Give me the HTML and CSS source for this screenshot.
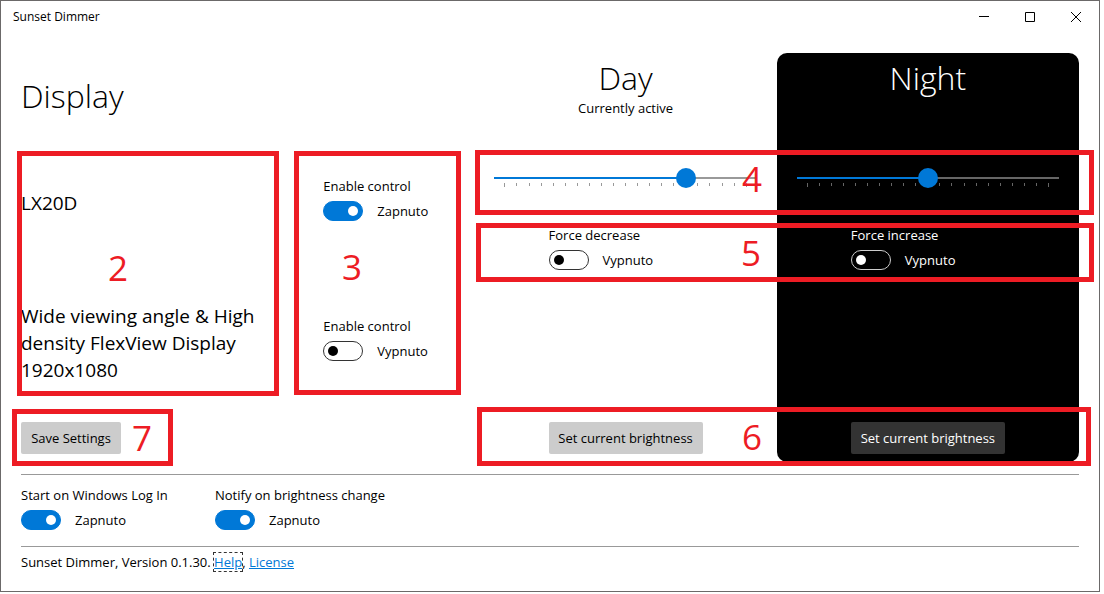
FILE: index.html
```html
<!DOCTYPE html>
<html lang="en">
<head>
<meta charset="utf-8">
<title>Sunset Dimmer</title>
<link rel="stylesheet" href="styles.css">
</head>
<body>
<div class="window">
  <header class="titlebar">
    <span class="titlebar-name">Sunset Dimmer</span>
    <button class="caption-button" type="button" aria-label="Minimize"><svg width="10" height="10" viewBox="0 0 10 10"><path d="M0 4.5H10"/></svg></button>
    <button class="caption-button" type="button" aria-label="Maximize"><svg width="10" height="10" viewBox="0 0 10 10"><path d="M.5 .5H9.5V9.5H.5Z"/></svg></button>
    <button class="caption-button" type="button" aria-label="Close"><svg width="10" height="10" viewBox="0 0 10 10"><path d="M0 0L10 10M10 0L0 10"/></svg></button>
  </header>

  <main class="content">
    <div class="board">
      <section class="column">
        <h1 class="heading heading-left">Display</h1>
        <p class="monitor">LX20D</p>
        <p class="monitor">Wide viewing angle &amp; High density FlexView Display 1920x1080</p>
        <button class="button save" type="button">Save Settings</button>
      </section>

      <section class="column">
        <div class="toggle enable first">
          <label for="enable-1">Enable control</label>
          <div class="toggle-row"><input class="switch" type="checkbox" role="switch" id="enable-1" checked><span>Zapnuto</span></div>
        </div>
        <div class="toggle enable second">
          <label for="enable-2">Enable control</label>
          <div class="toggle-row"><input class="switch" type="checkbox" role="switch" id="enable-2"><span>Vypnuto</span></div>
        </div>
      </section>

      <section class="column">
        <div class="period-head">
          <h2 class="heading">Day</h2>
          <span>Currently active</span>
        </div>
        <div class="period-controls">
          <div class="slider">
            <div class="ticks"><i></i><i></i><i></i><i></i><i></i><i></i><i></i><i></i><i></i><i></i><i></i><i></i><i></i><i></i><i></i><i></i><i></i><i></i><i></i><i></i><i></i></div>
            <input class="range" type="range" min="0" max="100" value="75" aria-label="Day brightness" style="--level: 75%">
          </div>
          <div class="toggle force">
            <label for="force-day">Force decrease</label>
            <div class="toggle-row"><input class="switch" type="checkbox" role="switch" id="force-day"><span>Vypnuto</span></div>
          </div>
        </div>
        <button class="button" type="button">Set current brightness</button>
      </section>

      <section class="column night">
        <div class="period-head">
          <h2 class="heading">Night</h2>
        </div>
        <div class="period-controls">
          <div class="slider">
            <div class="ticks"><i></i><i></i><i></i><i></i><i></i><i></i><i></i><i></i><i></i><i></i><i></i><i></i><i></i><i></i><i></i><i></i><i></i><i></i><i></i><i></i><i></i></div>
            <input class="range" type="range" min="0" max="100" value="50" aria-label="Night brightness" style="--level: 50%">
          </div>
          <div class="toggle force">
            <label for="force-night">Force increase</label>
            <div class="toggle-row"><input class="switch" type="checkbox" role="switch" id="force-night"><span>Vypnuto</span></div>
          </div>
        </div>
        <button class="button" type="button">Set current brightness</button>
      </section>
    </div>

    <section class="options">
      <div class="toggle">
        <label for="autostart">Start on Windows Log In</label>
        <div class="toggle-row"><input class="switch" type="checkbox" role="switch" id="autostart" checked><span>Zapnuto</span></div>
      </div>
      <div class="toggle">
        <label for="notify">Notify on brightness change</label>
        <div class="toggle-row"><input class="switch" type="checkbox" role="switch" id="notify" checked><span>Zapnuto</span></div>
      </div>
    </section>

    <footer class="about">Sunset Dimmer, Version 0.1.30. <a class="focused" href="#help">Help</a>, <a href="#license">License</a></footer>
  </main>

  <div class="note note-2"><span>2</span></div>
  <div class="note note-3"><span>3</span></div>
  <div class="note note-4"><span>4</span></div>
  <div class="note note-5"><span>5</span></div>
  <div class="note note-6"><span>6</span></div>
  <div class="note note-7"><span>7</span></div>
</div>
</body>
</html>
```
FILE: styles.css
```css
* { box-sizing: border-box; }

body {
  margin: 0 4px 2px 0;
  background: #fff;
  color: #000;
  font: 13px/18px "Open Sans", "Noto Sans", sans-serif;
}

h1, h2, p { margin: 0; }

.window {
  position: relative;
  border: 1px solid #6b6969;
}

/* Title bar */
.titlebar {
  display: flex;
  align-items: center;
  height: 32px;
  padding-left: 12px;
  font-size: 12px;
}
.titlebar-name { flex: 1; }
.caption-button {
  display: flex;
  align-items: center;
  justify-content: center;
  width: 46px;
  height: 32px;
  padding: 0;
  border: 0;
  background: none;
}
.caption-button svg { fill: none; stroke: #000; stroke-width: 1; }

/* Main board */
.content { padding: 20px; }
.board {
  display: grid;
  grid-template-columns: 2fr 1fr 2fr 2fr;
  grid-template-rows: 80px 140px 140px 49px;
}
.column {
  display: grid;
  grid-row: 1 / -1;
  grid-template-rows: subgrid;
  min-width: 0;
}
.heading {
  font-size: 32px;
  line-height: 43px;
  font-weight: 300;
}
.heading-left { align-self: center; padding-top: 4px; }
.monitor {
  align-self: center;
  max-width: 260px;
  font-size: 19px;
  line-height: 27px;
}
.period-head {
  display: flex;
  flex-direction: column;
  align-items: center;
  padding-top: 3px;
}
.period-controls {
  grid-row: 2 / 4;
  display: flex;
  flex-direction: column;
  align-items: center;
  gap: 38px;
  padding: 35px 20px 0;
}
.night {
  border-radius: 10px;
  background: #000;
  color: #fff;
}

/* Buttons */
.button {
  grid-row: 4;
  place-self: center;
  width: 154px;
  height: 32px;
  padding: 0;
  border: 0;
  border-radius: 2px;
  background: #ccc;
  color: inherit;
  font: inherit;
}
.save { justify-self: start; width: 100px; }
.night .button { background: #333; }

/* Toggle switches */
.toggle { display: flex; flex-direction: column; min-width: 154px; }
.toggle-row {
  display: flex;
  align-items: center;
  gap: 14px;
  height: 32px;
}
.enable { min-width: 0; padding-top: 44px; }
.first { grid-row: 2; }
.second { grid-row: 3; }
.switch {
  appearance: none;
  display: flex;
  align-items: center;
  width: 40px;
  height: 20px;
  margin: 0;
  padding: 0 4px;
  border: 1px solid #333;
  border-radius: 10px;
}
.switch::before {
  content: "";
  width: 10px;
  height: 10px;
  border-radius: 50%;
  background: #000;
}
.switch:checked {
  justify-content: flex-end;
  border-color: #0078d7;
  background: #0078d7;
}
.switch:checked::before { background: #fff; }
.night .switch { border-color: #ccc; }
.night .switch::before { background: #fff; }

/* Sliders */
.slider {
  --rest: #999;
  position: relative;
  width: 100%;
  height: 20px;
}
.night .slider { --rest: #666; }
.ticks {
  position: absolute;
  inset: 15px 10px auto;
  display: flex;
  justify-content: space-between;
}
.ticks i { width: 1px; height: 3px; background: var(--rest); }
.ticks i:first-child, .ticks i:last-child { height: 4px; }
.range {
  appearance: none;
  position: relative;
  display: block;
  width: 100%;
  height: 20px;
  margin: 0;
  background: none;
}
.range::-webkit-slider-runnable-track {
  height: 20px;
  background: linear-gradient(to right, #0078d7 var(--level), var(--rest) var(--level)) center / 100% 2px no-repeat;
}
.range::-webkit-slider-thumb {
  appearance: none;
  width: 20px;
  height: 20px;
  border-radius: 50%;
  background: #0078d7;
}

/* Options and footer */
.options {
  display: flex;
  gap: 40px;
  margin-top: 12px;
  padding: 11px 0 10px;
  border: solid #999;
  border-width: 1px 0;
}
.about { padding-top: 6px; }
.about a { color: #0078d7; }
.about .focused { outline: 1px dashed #333; }

/* Numbered callouts drawn over the window */
.note {
  position: absolute;
  display: flex;
  align-items: center;
  border: 5px solid #ed1c24;
  color: #ed1c24;
  font-size: 35px;
  line-height: 40px;
  pointer-events: none;
}
.note-2 { left: 16px; top: 150px; width: 262px; height: 245px; padding: 0 0 12px 86px; }
.note-3 { left: 293px; top: 150px; width: 167px; height: 244px; padding: 0 0 12px 43px; }
.note-4 { left: 474px; right: 5px; top: 149px; height: 65px; padding: 0 0 8px 262px; }
.note-5 { left: 475px; right: 5px; top: 222px; height: 59px; padding-left: 260px; }
.note-6 { left: 476px; right: 8px; top: 406px; height: 59px; padding-left: 260px; }
.note-7 { left: 11px; top: 408px; width: 161px; height: 57px; padding-left: 115px; }
```
